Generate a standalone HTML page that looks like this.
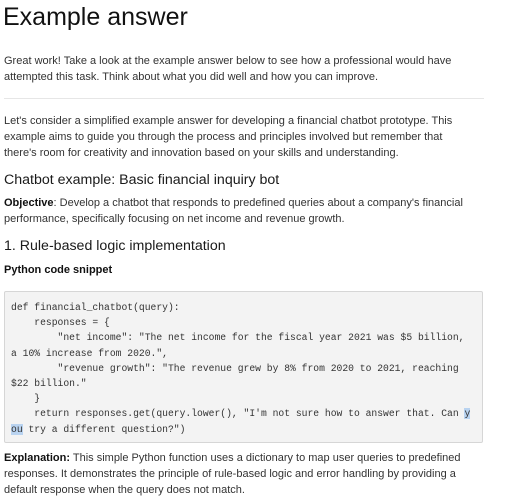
<!DOCTYPE html>
<html><head><meta charset="utf-8"><style>
body{margin:0;width:515px;height:500px;background:#fff;overflow:hidden;font-family:"Liberation Sans",sans-serif;color:#1f1f1f;position:relative}
.l{position:absolute;left:4px;white-space:nowrap;font-size:11px;line-height:16px;color:#333}
.h1{position:absolute;left:3px;top:3px;font-size:25px;color:#111;white-space:nowrap}
.h2{position:absolute;left:4px;font-size:14.2px;color:#1a1a1a;white-space:nowrap}
b{color:#111}
.code{position:absolute;left:4px;top:291px;width:477px;height:150px;background:#f3f3f3;border:1px solid #d6d6d6;border-radius:2px}
pre{position:absolute;left:6px;top:8px;margin:0;font-family:"Liberation Mono",monospace;font-size:9.7px;line-height:15.2px;color:#333}
.sel{background:#b9d3f0}
</style></head><body>
<div class="h1">Example answer</div>
<div class="l" style="top:53px">Great work! Take a look at the example answer below to see how a professional would have</div>
<div class="l" style="top:69px">attempted this task. Think about what you did well and how you can improve.</div>
<div style="position:absolute;left:4px;top:98px;width:480px;height:1px;background:#e6e6e6"></div>
<div class="l" style="top:113px">Let's consider a simplified example answer for developing a financial chatbot prototype. This</div>
<div class="l" style="top:129px">example aims to guide you through the process and principles involved but remember that</div>
<div class="l" style="top:145px">there's room for creativity and innovation based on your skills and understanding.</div>
<div class="h2" style="top:172px">Chatbot example: Basic financial inquiry bot</div>
<div class="l" style="top:195px"><b>Objective</b>: Develop a chatbot that responds to predefined queries about a company's financial</div>
<div class="l" style="top:211px">performance, specifically focusing on net income and revenue growth.</div>
<div class="h2" style="top:238px">1. Rule-based logic implementation</div>
<div class="l" style="top:262px"><b>Python code snippet</b></div>
<div class="code"><pre>def financial_chatbot(query):
    responses = {
        "net income": "The net income for the fiscal year 2021 was $5 billion,
a 10% increase from 2020.",
        "revenue growth": "The revenue grew by 8% from 2020 to 2021, reaching
$22 billion."
    }
    return responses.get(query.lower(), "I'm not sure how to answer that. Can <span class="sel">y</span>
<span class="sel">ou</span> try a different question?")</pre></div>
<div class="l" style="top:450px"><b>Explanation:</b> This simple Python function uses a dictionary to map user queries to predefined</div>
<div class="l" style="top:466px">responses. It demonstrates the principle of rule-based logic and error handling by providing a</div>
<div class="l" style="top:482px">default response when the query does not match.</div>
</body></html>
